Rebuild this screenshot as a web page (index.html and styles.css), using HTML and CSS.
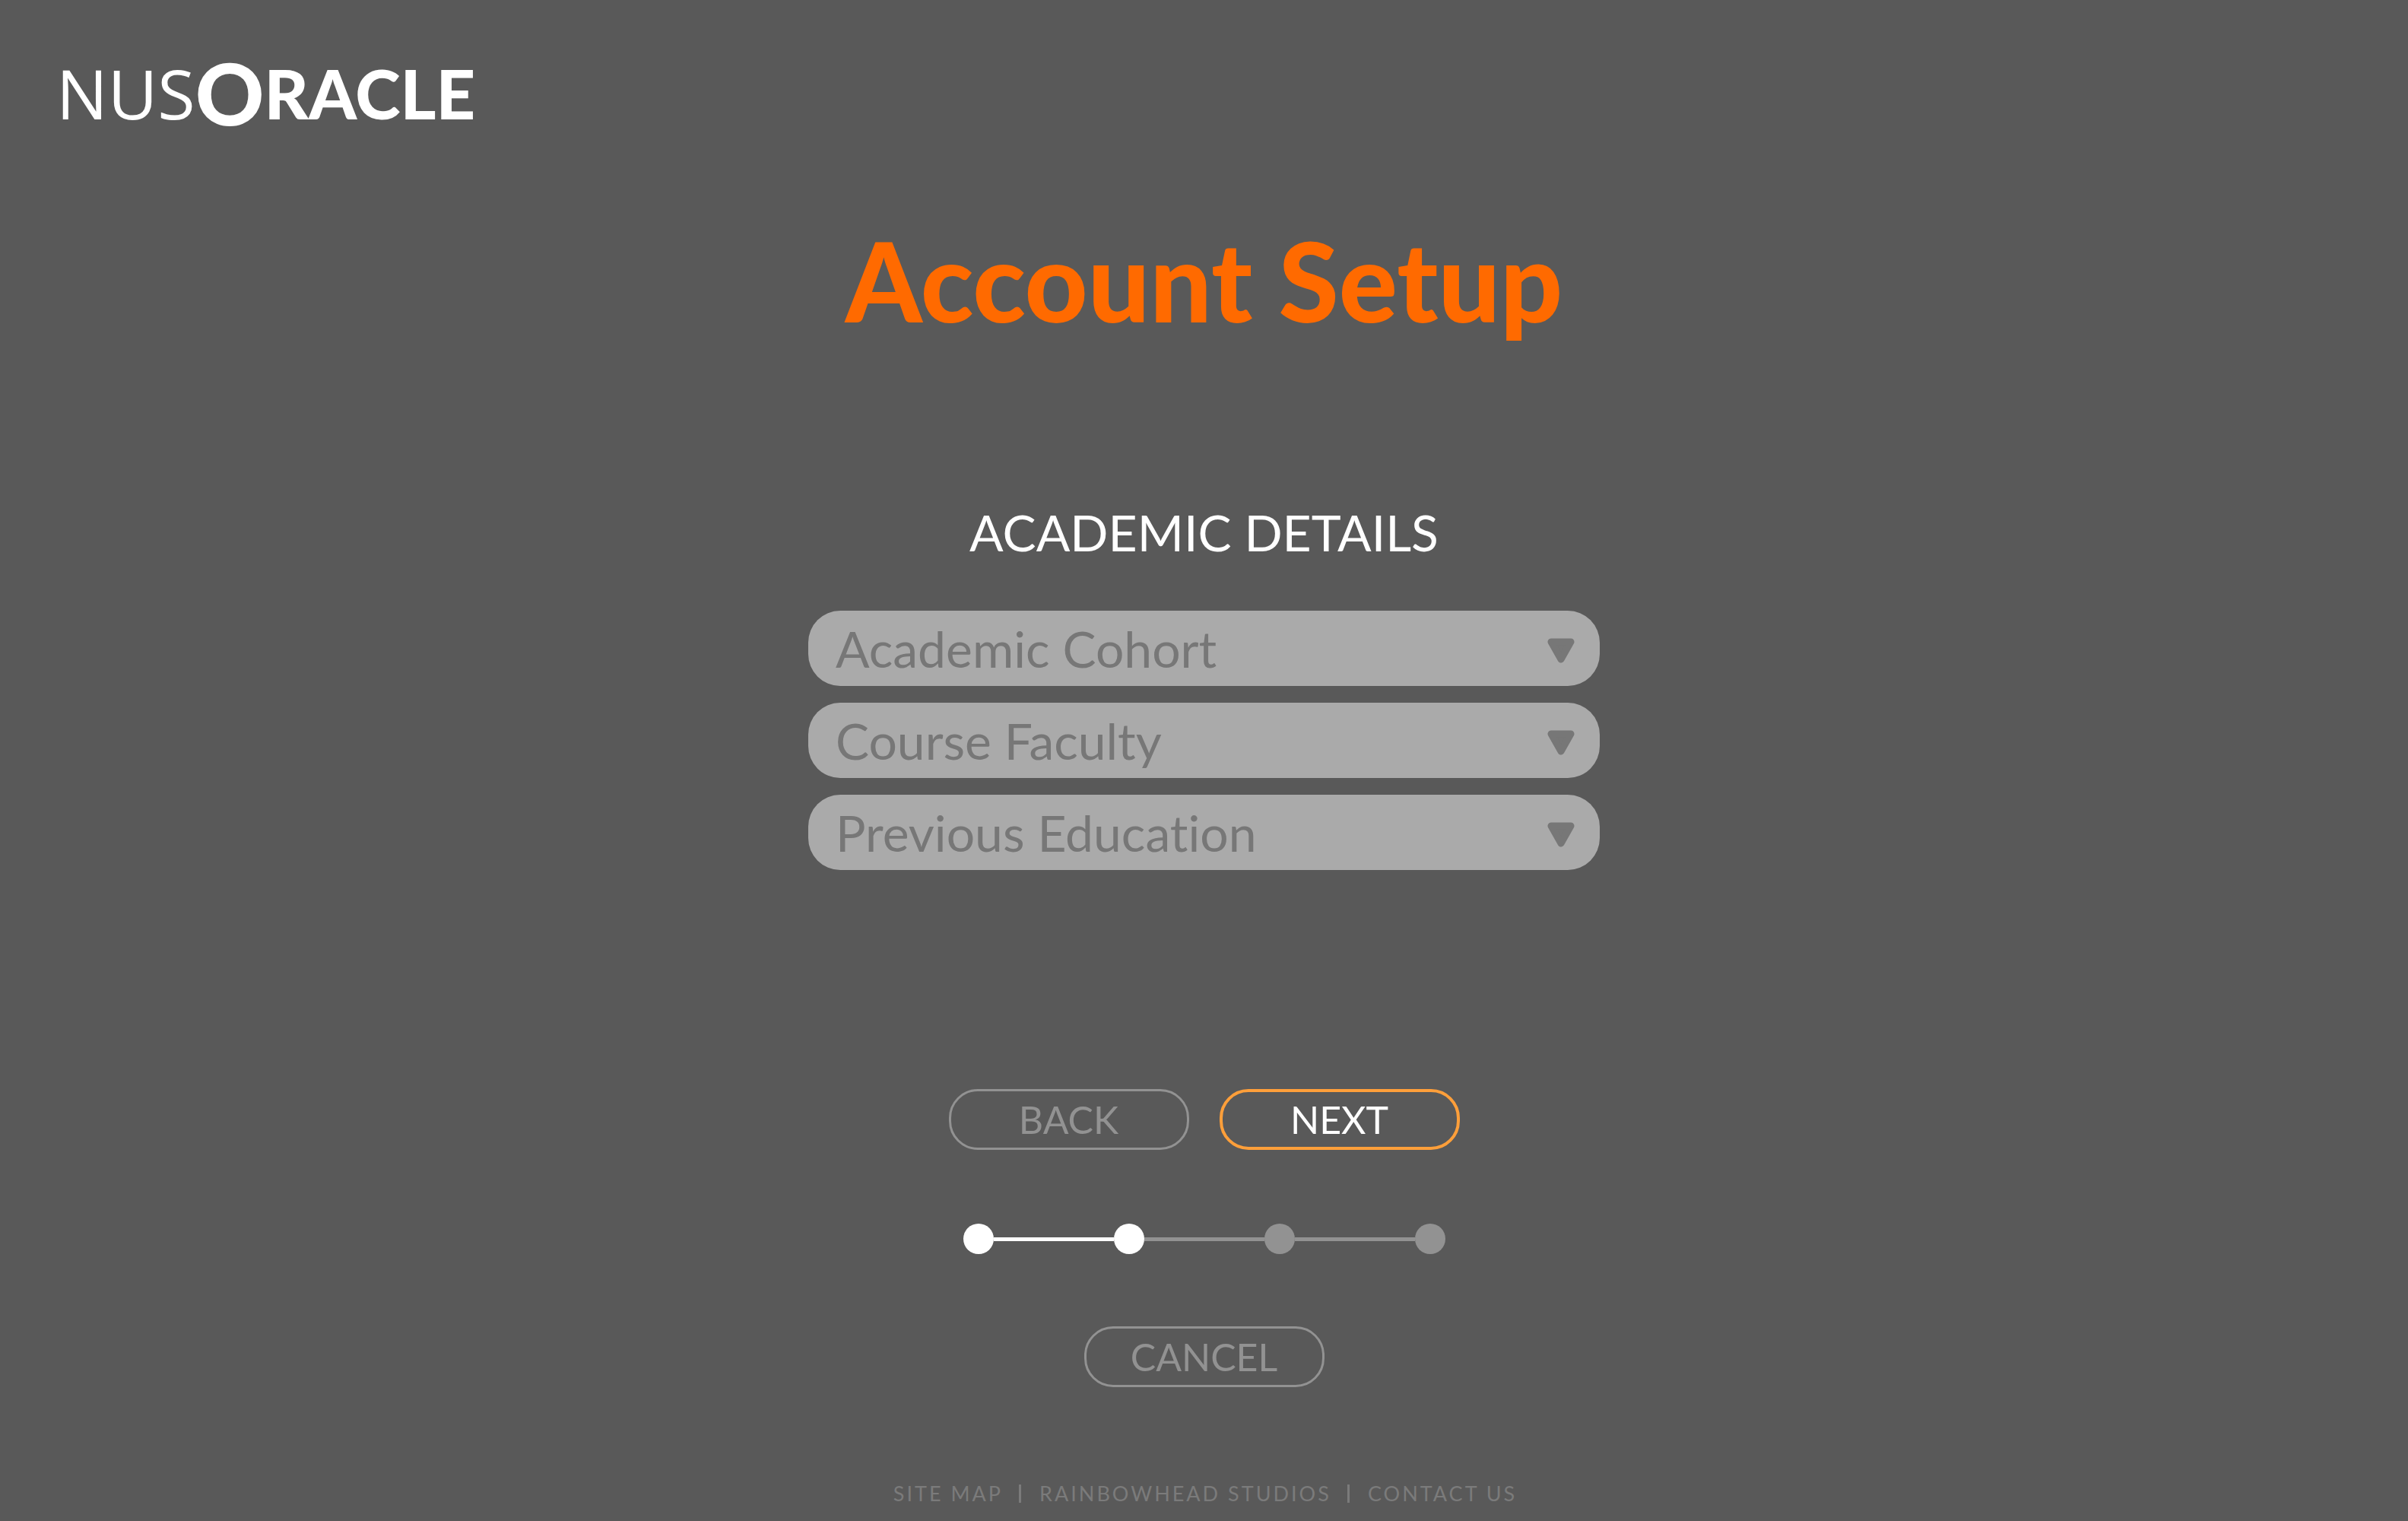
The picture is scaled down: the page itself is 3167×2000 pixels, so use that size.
FILE: index.html
```html
<!DOCTYPE html>
<html lang="en">
<head>
<meta charset="utf-8">
<title>NUSOracle – Account Setup</title>
<meta name="viewport" content="width=device-width, initial-scale=1">
<link rel="stylesheet" href="styles.css">
</head>
<body>
<header class="site-header">
  <a class="logo" href="#"><span class="logo-light">NUS</span><span class="logo-o">O</span><span class="logo-bold">RACLE</span></a>
</header>
<main class="setup">
  <h1 class="title">Account Setup</h1>
  <form class="form">
    <h2 class="subtitle">ACADEMIC DETAILS</h2>
    <div class="fields">
      <div class="field">
        <select class="select" aria-label="Academic Cohort"><option>Academic Cohort</option></select>
        <svg class="arrow" viewBox="0 0 36 33" aria-hidden="true"><path d="M5 5H31L18 28Z"/></svg>
      </div>
      <div class="field">
        <select class="select" aria-label="Course Faculty"><option>Course Faculty</option></select>
        <svg class="arrow" viewBox="0 0 36 33" aria-hidden="true"><path d="M5 5H31L18 28Z"/></svg>
      </div>
      <div class="field">
        <select class="select" aria-label="Previous Education"><option>Previous Education</option></select>
        <svg class="arrow" viewBox="0 0 36 33" aria-hidden="true"><path d="M5 5H31L18 28Z"/></svg>
      </div>
    </div>
    <div class="actions">
      <button class="button" type="button">BACK</button>
      <button class="button button-next" type="submit">NEXT</button>
    </div>
    <ol class="steps" aria-label="Progress">
      <li class="step done"></li>
      <li class="step done"></li>
      <li class="step"></li>
      <li class="step"></li>
    </ol>
    <button class="button button-cancel" type="button">CANCEL</button>
  </form>
</main>
<footer class="site-footer">
  <a class="footer-link" href="#">SITE MAP</a>
  <a class="footer-link" href="#">RAINBOWHEAD STUDIOS</a>
  <a class="footer-link" href="#">CONTACT US</a>
</footer>
</body>
</html>
```
FILE: styles.css
```css
* { box-sizing: border-box; }

body {
  margin: 0;
  min-height: 100vh;
  display: flex;
  flex-direction: column;
  background: #595959;
  color: #fff;
  font-family: Lato, "Open Sans", sans-serif;
}

.site-header { padding: 62px 74px 0; }

.logo {
  display: inline-flex;
  align-items: center;
  height: 120px;
  line-height: 120px;
  color: #fff;
  font-family: "Open Sans", "Noto Sans", sans-serif;
  font-size: 90px;
  text-decoration: none;
}
.logo-o,
.logo-bold {
  font-family: "Lato Black", Lato, sans-serif;
  font-weight: 900;
}
.logo-o { font-size: 112px; }

.setup {
  display: flex;
  flex-direction: column;
  align-items: center;
  padding: 0 40px;
}

.title {
  margin: 102px 0 0;
  color: #ff6a00;
  font-family: "Lato Black", Lato, sans-serif;
  font-size: 144px;
  font-weight: 900;
  line-height: 170px;
}

.form {
  display: flex;
  flex-direction: column;
  align-items: center;
  width: 100%;
  max-width: 1041px;
}

.subtitle {
  margin: 198px 0 56px;
  font-size: 66px;
  font-weight: 400;
  line-height: 95px;
}

.fields {
  display: grid;
  gap: 22px;
  width: 100%;
}
.field { position: relative; display: flex; }

.select {
  appearance: none;
  width: 100%;
  height: 99px;
  padding: 0 100px 0 36px;
  border: 0;
  border-radius: 42px;
  background: #aaa;
  color: #777;
  font: 400 66px/96px Lato, "Open Sans", sans-serif;
  font-variant-ligatures: none;
}

.arrow {
  position: absolute;
  top: 36px;
  right: 33px;
  width: 36px;
  height: 33px;
  fill: #777;
  stroke: #777;
  stroke-width: 9;
  stroke-linejoin: round;
  pointer-events: none;
}

.actions {
  display: flex;
  gap: 40px;
  margin-top: 288px;
}

.button {
  width: 316px;
  height: 80px;
  padding: 0;
  border: 3px solid #929292;
  border-radius: 38px;
  background: none;
  color: #929292;
  font: 400 50px/64px Lato, "Open Sans", sans-serif;
}
.button-next { border: 4px solid #ff9f3a; color: #fff; }

.steps {
  display: flex;
  align-items: center;
  gap: 158px;
  margin: 97px 0 95px;
  padding: 0;
  list-style: none;
}
.step {
  position: relative;
  width: 40px;
  height: 40px;
  border-radius: 50%;
  background: #929292;
}
.step + .step::before {
  content: "";
  position: absolute;
  top: 18px;
  right: 100%;
  width: 158px;
  height: 5px;
  background: inherit;
}
.step.done { background: #fff; }

.site-footer {
  display: flex;
  justify-content: center;
  margin-top: auto;
  padding-bottom: 24px;
}
.footer-link {
  padding: 0 21px 0 24px;
  color: #7b7b7b;
  font-size: 27px;
  line-height: 24px;
  letter-spacing: 3px;
  text-decoration: none;
}
.footer-link + .footer-link { border-left: 3px solid #7b7b7b; }
```
